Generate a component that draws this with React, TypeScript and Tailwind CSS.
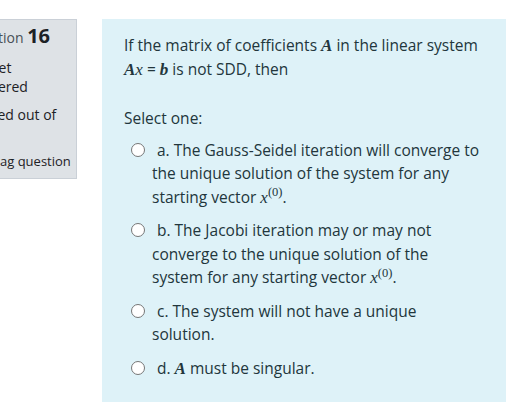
import React from 'react'

const M = ({ children, bold }: { children: React.ReactNode; bold?: boolean }) => (
  <span
    className={`italic ${bold ? 'font-bold' : ''} text-[17px]`}
    style={{ fontFamily: '"Liberation Serif", "DejaVu Serif", serif' }}
  >
    {children}
  </span>
)

const X0 = () => (
  <span className="whitespace-nowrap">
    <M>x</M>
    <sup className="text-[12.5px] not-italic" style={{ fontFamily: '"Liberation Serif", serif' }}>
      (0)
    </sup>
  </span>
)

const Radio = () => (
  <span className="inline-block w-[14px] h-[14px] rounded-full border border-[#767676] bg-white align-[-1px] mr-[12px]" />
)

function Option({ children }: { children: React.ReactNode }) {
  return (
    <div className="pl-[28px] -indent-[21px] py-[5px]">
      <Radio />
      {children}
    </div>
  )
}

const Flag = () => (
  <svg width="16" height="16" viewBox="0 0 16 16" className="inline-block align-[-3px] mr-[10px]">
    <path d="M3 1v14" stroke="#555" strokeWidth="1.5" />
    <path d="M4 2h9l-2 3.5 2 3.5H4z" fill="none" stroke="#555" strokeWidth="1" />
  </svg>
)

export default function App() {
  return (
    <div
      className="w-[519px] h-[402px] bg-white overflow-hidden flex items-start gap-[25px] pt-[19px] text-[#22363c]"
      style={{ fontFamily: '"Open Sans", "Noto Sans", sans-serif' }}
    >
      <div className="w-[122px] -ml-[45px] shrink-0 h-[160px] bg-[#dee2e6] border border-[#cad0d7] px-[8px] pt-[2px] text-[14px] leading-[19px] text-[#1d2125]">
        <h3 className="text-[14px] leading-[28px] mb-[6px] text-[#495057]">
          Question <span className="text-[20px] font-bold text-[#1d2125]">16</span>
        </h3>
        <div className="mb-[9px]">Not yet answered</div>
        <div className="mb-[9px]">Marked out of 1.00</div>
        <div className="whitespace-nowrap text-[13px]">
          <Flag />
          Flag question
        </div>
      </div>

      <div className="flex-1 mr-[13px] h-[400px] bg-[#def2f8] pl-[22px] pr-[25px] pt-[15px] text-[15.5px] leading-[23.5px]">
        <div className="mb-[26px]">
          If the matrix of coefficients <M bold>A</M> in the linear system <M bold>A</M>
          <M>x</M> = <M bold>b</M> is not SDD, then
        </div>
        <div className="mb-[3px]">Select one:</div>
        <div>
          <Option>
            a. The Gauss-Seidel iteration will converge to the unique solution of the system
            for any starting vector <X0 />.
          </Option>
          <Option>
            b. The Jacobi iteration may or may not converge to the unique solution of the system
            for any starting vector <X0 />.
          </Option>
          <Option>c. The system will not have a unique solution.</Option>
          <Option>
            d. <M bold>A</M> must be singular.
          </Option>
        </div>
      </div>
    </div>
  )
}
